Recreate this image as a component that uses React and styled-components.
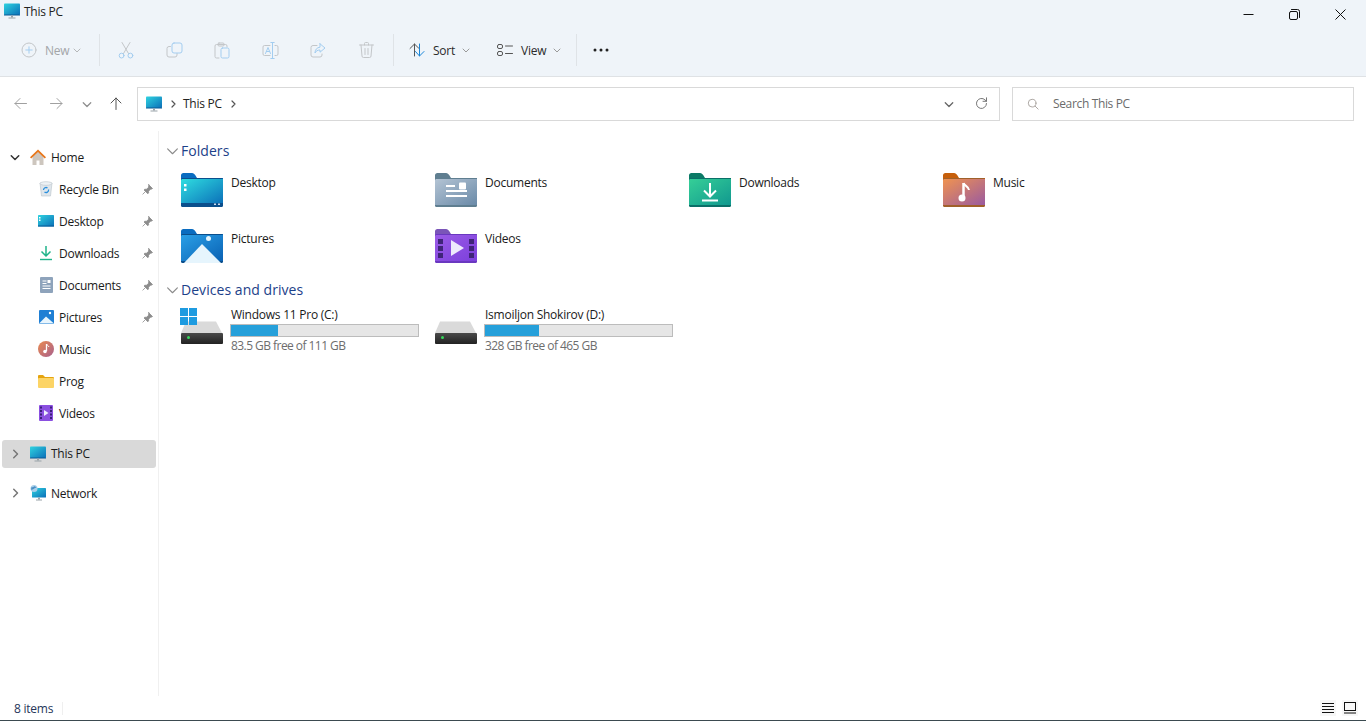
import styled, { createGlobalStyle } from "styled-components";

const GlobalStyle = createGlobalStyle`
    html, body, #root {
        margin: 0;
        padding: 0;
        height: 100%;
    }
    body {
        background: #fff;
        font-family: "Open Sans", "Noto Sans", "Liberation Sans", sans-serif;
        font-size: 12px;
        letter-spacing: -0.25px;
        color: #1a1a1a;
        overflow: hidden;
    }
`;

const Window = styled.div`
    height: 721px;
    display: flex;
    flex-direction: column;
    border-bottom: 1px solid #3b4a50;
    box-sizing: border-box;
`;

const TopBar = styled.div`
    height: 77px;
    box-sizing: border-box;
    background: #eff4f9;
    border-bottom: 1px solid #dfe2e5;
    flex-shrink: 0;
`;

const TitleRow = styled.div`
    height: 26px;
    display: flex;
    align-items: center;
    padding: 0 3px 4px 4px;
    box-sizing: border-box;
    gap: 4px;
`;

const TitleText = styled.span`
    flex: 1;
    line-height: 16px;
    padding-top: 1px;
    color: #222;
`;

const WinControls = styled.div`
    display: flex;
    margin-top: 6px;
`;

const WinButton = styled.div`
    width: 46px;
    height: 28px;
    display: flex;
    align-items: center;
    justify-content: center;
`;

const Toolbar = styled.div`
    height: 48px;
    display: flex;
    align-items: center;
    padding-left: 9px;
`;

const ToolSep = styled.div`
    width: 1px;
    height: 32px;
    background: #dfe3e7;
    margin: 0 ${p => p.$right ?? 2}px 0 ${p => p.$left ?? 6}px;
`;

const NewButton = styled.div`
    width: 84px;
    padding-left: 12px;
    box-sizing: border-box;
    display: flex;
    align-items: center;
    color: #a3a5a8;
`;

const NewGap = styled.span`
    width: 4px;
`;

const IconButton = styled.div`
    width: 48px;
    display: flex;
    justify-content: center;
    align-items: center;
`;

const MenuButton = styled.div`
    display: flex;
    align-items: center;
    width: ${p => p.$width}px;
    color: #2b2b2b;
    box-sizing: border-box;
`;

const MenuLabel = styled.span`
    margin: 0 ${p => p.$after}px 0 8px;
`;

const AddressRow = styled.div`
    height: 54px;
    flex-shrink: 0;
    display: flex;
    align-items: center;
    box-sizing: border-box;
    padding-right: 12px;
`;

const NavButtons = styled.div`
    width: 137px;
    display: flex;
    align-items: center;
    padding: 0 0 1px 14px;
    box-sizing: border-box;
    flex-shrink: 0;
`;

const NavSlot = styled.div`
    width: ${p => p.$width}px;
    display: flex;
    align-items: center;
`;

const InputBox = styled.div`
    height: 34px;
    box-sizing: border-box;
    border: 1px solid #d9d9d9;
    display: flex;
    align-items: center;
    background: #fff;
    padding-bottom: 1px;
`;

const AddressBox = styled(InputBox)`
    width: 863px;
    padding-left: 8px;
    padding-right: 11px;
`;

const AddressGap = styled.span`
    width: ${p => p.$width}px;
`;

const SearchBox = styled(InputBox)`
    width: 342px;
    margin-left: 12px;
    padding-left: 14px;
    color: #6b6b6b;
    gap: 14px;
    letter-spacing: -0.35px;
`;

const Crumb = styled.span`
    margin: 0 7px 0 6px;
    color: #222;
`;

const Spacer = styled.div`
    flex: 1;
`;

const Body = styled.div`
    flex: 1;
    display: flex;
    min-height: 0;
`;

const Sidebar = styled.nav`
    width: 159px;
    box-sizing: border-box;
    border-right: 1px solid #f0f0f0;
    padding-top: 10px;
    flex-shrink: 0;
`;

const NavRow = styled.div`
    height: ${p => (p.$top ? 28 : 32)}px;
    box-sizing: border-box;
    margin: ${p => (p.$top ? "11px 2px 0" : "0 2px")};
    padding-left: ${p => (p.$child ? 36 : 8)}px;
    padding-right: 3px;
    padding-bottom: ${p => (p.$selected ? 1 : 0)}px;
    display: flex;
    align-items: center;
    border-radius: 3px;
    background: ${p => (p.$selected ? "#d9d9d9" : "transparent")};
    color: #1a1a1a;
`;

const Twisty = styled.div`
    width: 20px;
    display: flex;
    align-items: center;
    justify-content: flex-start;
`;

const NavIcon = styled.div`
    width: 16px;
    height: 16px;
    display: flex;
    align-items: center;
    justify-content: center;
    margin-right: 5px;
`;

const NavLabel = styled.span`
    flex: 1;
`;

const Main = styled.main`
    flex: 1;
    padding: 9px 0 0 7px;
`;

const SectionHeader = styled.div`
    height: 20px;
    margin-top: ${p => p.$top || 0}px;
    display: flex;
    align-items: center;
    gap: 2px;
    font-size: 14px;
    letter-spacing: 0.05px;
    color: #1c4189;
`;

const TileGrid = styled.div`
    display: grid;
    grid-template-columns: repeat(4, 254px);
    row-gap: 22px;
    margin: ${p => p.$top}px 0 0 15px;
`;

const FolderTile = styled.div`
    height: 34px;
    display: flex;
    gap: 8px;
    color: #1a1a1a;
    line-height: 20px;
`;

const DriveTile = styled.div`
    display: flex;
    gap: 6px;
    margin-left: -1px;
`;

const DriveInfo = styled.div`
    width: 189px;
    margin-top: -1px;
    display: flex;
    flex-direction: column;
    line-height: 16px;
`;

const DriveName = styled.div`
    padding-left: 1px;
    margin-bottom: 1px;
`;

const UsageBar = styled.div`
    height: 13px;
    box-sizing: border-box;
    border: 1px solid #bcbcbc;
    background: #e6e6e6;
`;

const UsageFill = styled.div`
    height: 100%;
    background: #26a0da;
`;

const DriveFree = styled.div`
    padding: 1px 0 0 1px;
    color: #6d6d6d;
    letter-spacing: -0.55px;
`;

const StatusBar = styled.div`
    height: 24px;
    flex-shrink: 0;
    display: flex;
    align-items: center;
    padding: 0 8px 0 14px;
    color: #26365a;
`;

const StatusCount = styled.span`
    width: 49px;
    box-sizing: border-box;
    line-height: 12px;
    padding-top: 1px;
    border-right: 1px solid #efefef;
`;

const ViewToggle = styled.div`
    width: 16px;
    height: 16px;
    margin-left: 6px;
    background: #f7f7f7;
    display: flex;
    align-items: center;
    justify-content: center;
`;

const Line = { fill: "none", strokeLinecap: "round", strokeLinejoin: "round" };

const Chevron = ({ dir = "down", size = 8, color = "#9a9a9a", width = 1 }) => {
    const d = { down: "M1 3l3 3 3-3", right: "M3 1l3 3-3 3" }[dir];
    return (
        <svg width={size} height={size} viewBox="0 0 8 8">
            <path d={d} {...Line} stroke={color} strokeWidth={width} />
        </svg>
    );
};

const Monitor = ({ id, size = 16 }) => (
    <svg width={size} height={size} viewBox="0 0 16 16">
        <defs>
            <linearGradient id={id} x1="0" y1="0" x2="1" y2="1">
                <stop offset="0" stopColor="#2fd3e0" />
                <stop offset="1" stopColor="#0b6fb8" />
            </linearGradient>
        </defs>
        <rect x="0" y="0.5" width="16" height="11.5" rx="0.8" fill={`url(#${id})`} />
        <rect x="0" y="11.5" width="16" height="1" fill="#0a5a96" />
        <rect x="7" y="12.5" width="2" height="2" fill="#9aa3aa" />
        <rect x="4.5" y="14.5" width="7" height="1" fill="#9aa3aa" />
    </svg>
);

const ArrowIcon = ({ dir, color }) => {
    const d = {
        left: "M12.5 6.5H1M6 1.5l-5 5 5 5",
        right: "M.5 6.5H12M7 1.5l5 5-5 5",
        up: "M6 12.5V1M1 6l5-5 5 5",
    }[dir];
    return (
        <svg width="13" height="13" viewBox="0 0 13 13">
            <path d={d} {...Line} stroke={color} strokeWidth="1" />
        </svg>
    );
};

const GREY = "#c3c6c9";
const SKY = "#a3cdf0";

const NewIcon = () => (
    <svg width="16" height="16" viewBox="0 0 16 16" style={{ marginRight: 8 }}>
        <circle cx="8" cy="8" r="7" {...Line} stroke={GREY} />
        <path d="M8 4.8v6.4M4.8 8h6.4" {...Line} stroke={SKY} />
    </svg>
);

const CutIcon = () => (
    <svg width="16" height="17" viewBox="0 0 16 17">
        <path d="M4 .5l6.5 11M12 .5L5.500 11.500" {...Line} stroke={GREY} />
        <circle cx="3.600" cy="13.600" r="2.400" {...Line} stroke={SKY} />
        <circle cx="12.400" cy="13.600" r="2.400" {...Line} stroke={SKY} />
    </svg>
);

const CopyIcon = () => (
    <svg width="17" height="16" viewBox="0 0 17 16">
        <path d="M4.500 4.500H3A2 2 0 0 0 1 6.500V13a2 2 0 0 0 2 2h6a2 2 0 0 0 2-2v-1.500" {...Line} stroke={GREY} />
        <rect x="6" y="1" width="10" height="10" rx="2" {...Line} stroke={SKY} />
    </svg>
);

const PasteIcon = () => (
    <svg width="16" height="17" viewBox="0 0 16 17">
        <path d="M5 16H2.500A1.500 1.500 0 0 1 1 14.500V4a1.500 1.500 0 0 1 1.500-1.500h9A1.500 1.500 0 0 1 13 4v1" {...Line} stroke={GREY} />
        <rect x="4" y="1" width="6" height="3" rx="1" {...Line} stroke={GREY} />
        <rect x="7" y="6" width="8" height="10" rx="1.500" {...Line} stroke={SKY} />
    </svg>
);

const RenameIcon = () => (
    <svg width="17" height="17" viewBox="0 0 17 17">
        <path d="M8 3.500H2.500A1.500 1.500 0 0 0 1 5v7a1.500 1.500 0 0 0 1.500 1.500H8M13 3.500h1.500A1.500 1.500 0 0 1 16 5v7a1.500 1.500 0 0 1-1.500 1.500H13" {...Line} stroke={GREY} />
        <path d="M3.500 11.500L6 5.500l2.500 6M4.500 9.500h3" {...Line} stroke={SKY} />
        <path d="M10.500.5v16M8.800.5h3.400M8.800 16.500h3.400" {...Line} stroke={SKY} />
    </svg>
);

const ShareIcon = () => (
    <svg width="16" height="15" viewBox="0 0 16 15">
        <path d="M7 2.500H3A2 2 0 0 0 1 4.500V12a2 2 0 0 0 2 2h7a2 2 0 0 0 2-2v-1" {...Line} stroke={GREY} />
        <path d="M10 .8L15 5l-5 4.200V7C7.500 7 6 8 5 10c0-3.500 2-5.500 5-5.800V.8z" {...Line} stroke={SKY} />
    </svg>
);

const TrashIcon = () => (
    <svg width="15" height="16" viewBox="0 0 15 16">
        <path d="M.5 3h14M5.500 3V1.500a1 1 0 0 1 1-1h2a1 1 0 0 1 1 1V3M2 3l1 11a1.500 1.500 0 0 0 1.500 1.500h6A1.500 1.500 0 0 0 12 14l1-11M6 6.500v6M9 6.500v6" {...Line} stroke={GREY} />
    </svg>
);

const SortIcon = () => (
    <svg width="16" height="14" viewBox="0 0 16 14">
        <path d="M5.500 13V1M1 5.500l4.500-4.500L10 5.500" {...Line} stroke="#555" />
        <path d="M10.500 1v12M6.500 8.500l4 4.500 4.500-4.500" {...Line} stroke="#1a86d8" />
    </svg>
);

const ViewIcon = () => (
    <svg width="16" height="12" viewBox="0 0 16 12">
        <rect x=".5" y=".5" width="5" height="4" rx="1.500" {...Line} stroke="#555" />
        <rect x=".5" y="7.500" width="5" height="4" rx="1.500" {...Line} stroke="#555" />
        <path d="M8.500 2h7M8.500 9.500h7" {...Line} stroke="#555" />
    </svg>
);

const DotsIcon = () => (
    <svg width="16" height="4" viewBox="0 0 16 4">
        <circle cx="2" cy="2" r="1.500" fill="#222" />
        <circle cx="8" cy="2" r="1.500" fill="#222" />
        <circle cx="14" cy="2" r="1.500" fill="#222" />
    </svg>
);

const PinIcon = () => (
    <svg width="11" height="11" viewBox="0 0 11 11">
        <path d="M6.500.5l4 4-1 .6-1 .1-2 2 .1 1.700-.8.8L2 6l.8-.8 1.700.1 2-2 .1-1 .4-1.800zM3.400 7.600L.6 10.400" fill="#8c8c8c" stroke="#8c8c8c" strokeWidth=".8" strokeLinejoin="round" />
    </svg>
);

const HomeIcon = () => (
    <svg width="16" height="16" viewBox="0 0 16 16">
        <path d="M2.500 7.500V16h4v-4.500h3V16h4V7.500L8 2.500z" fill="#cdc6be" />
        <path d="M0 8.200L8 .5l8 7.700-1.200 1.200L8 3 1.200 9.400z" fill="#e8761a" />
    </svg>
);

const BinIcon = () => (
    <svg width="14" height="16" viewBox="0 0 14 16">
        <path d="M1 2l1.500 13h9L13 2z" fill="#dfe6ec" stroke="#b9c2ca" strokeWidth=".6" />
        <ellipse cx="7" cy="2.500" rx="6" ry="1.800" fill="#eef2f5" stroke="#b9c2ca" strokeWidth=".6" />
        <path d="M4.500 9a2.500 2.500 0 0 1 4-2M9.500 8.500a2.500 2.500 0 0 1-4 2.500" fill="none" stroke="#2a8fdc" strokeWidth="1.300" />
    </svg>
);

const DesktopMini = () => (
    <svg width="16" height="12" viewBox="0 0 16 12">
        <defs>
            <linearGradient id="miniDesk" x1="0" y1="0" x2="1" y2="1">
                <stop offset="0" stopColor="#2fd3e0" />
                <stop offset="1" stopColor="#0b6fb8" />
            </linearGradient>
        </defs>
        <rect width="16" height="11.500" rx=".6" fill="url(#miniDesk)" />
        <rect y="10.500" width="16" height="1" fill="#0a5a96" />
        <rect x="1" y="2" width="1.500" height="1.500" fill="#fff" />
        <rect x="1" y="4.500" width="1.500" height="1.500" fill="#fff" />
    </svg>
);

const DownloadMini = () => (
    <svg width="12" height="16" viewBox="0 0 12 16">
        <path d="M6 1v9.500M1.500 6.500L6 11l4.500-4.500" fill="none" stroke="#21b48a" strokeWidth="1.500" />
        <rect y="13.800" width="12" height="1.400" fill="#21b48a" />
    </svg>
);

const DocMini = () => (
    <svg width="13" height="16" viewBox="0 0 13 16">
        <rect width="13" height="16" rx="1" fill="#8ea3bb" />
        <path d="M2.500 4h4M2.500 6.500h4M2.500 9h8M2.500 11.500h8" stroke="#fff" strokeWidth="1" />
        <rect x="7.500" y="3" width="3" height="3" fill="#fff" />
    </svg>
);

const PictureMini = () => (
    <svg width="15" height="14" viewBox="0 0 15 14">
        <rect width="15" height="14" rx="1" fill="#1f7fd4" />
        <path d="M0 13.500L7 6.500l8 7z" fill="#e8f5fd" />
        <circle cx="11" cy="3" r="1.200" fill="#fff" />
    </svg>
);

const MusicMini = () => (
    <svg width="16" height="16" viewBox="0 0 16 16">
        <defs>
            <linearGradient id="miniMusic" x1="0" y1="0" x2="1" y2="1">
                <stop offset="0" stopColor="#ea8a4f" />
                <stop offset="1" stopColor="#a8608e" />
            </linearGradient>
        </defs>
        <circle cx="8" cy="8" r="8" fill="url(#miniMusic)" />
        <path d="M8.500 3v7" stroke="#fff" strokeWidth="1.300" />
        <path d="M8.500 3c.5 1.500 2 1.500 2.500 3" stroke="#fff" fill="none" />
        <circle cx="7" cy="10.500" r="1.800" fill="#fff" />
    </svg>
);

const FolderMini = () => (
    <svg width="16" height="13" viewBox="0 0 16 13">
        <path d="M0 1a1 1 0 0 1 1-1h4l2 2h8a1 1 0 0 1 1 1v1H0z" fill="#e5a40f" />
        <rect y="3" width="16" height="10" rx="1" fill="#fcd466" />
    </svg>
);

const VideoMini = () => (
    <svg width="14" height="16" viewBox="0 0 14 16">
        <rect width="14" height="16" rx="1" fill="#8a4fe0" />
        {[1.500, 5, 8.500, 12].map(y => (
            <g key={y}>
                <rect x="1" y={y} width="2" height="2" fill="#3a1f78" />
                <rect x="11" y={y} width="2" height="2" fill="#3a1f78" />
            </g>
        ))}
        <path d="M5 5l4.500 3L5 11z" fill="#eef" />
    </svg>
);

const NetworkIcon = () => (
    <svg width="16" height="16" viewBox="0 0 16 16">
        <defs>
            <linearGradient id="netScreen" x1="0" y1="0" x2="1" y2="1">
                <stop offset="0" stopColor="#2fd3e0" />
                <stop offset="1" stopColor="#0b6fb8" />
            </linearGradient>
        </defs>
        <rect x="2" y="3" width="14" height="9.500" rx=".6" fill="url(#netScreen)" />
        <rect x="8" y="12.500" width="2" height="2" fill="#9aa3aa" />
        <rect x="6" y="14.500" width="6" height="1" fill="#9aa3aa" />
        <circle cx="4" cy="3.500" r="3.500" fill="#a9cfe9" />
        <path d="M1.500 2c1 .5 2 .2 2.500-.5s2 .5 2.500 1c-1 0-2 1-3 1.500S2 5 1 4.500z" fill="#4b8fc4" />
    </svg>
);

// big folder icon, the artwork in front of it is passed as children
const Folder = ({ id, tab, from, to, edge, children }) => (
    <svg width="42" height="34" viewBox="0 0 42 34">
        <defs>
            <linearGradient id={id} x1="0" y1="0" x2="1" y2="1">
                <stop offset="0" stopColor={from} />
                <stop offset="1" stopColor={to} />
            </linearGradient>
        </defs>
        <path d="M0 2.500A2.500 2.500 0 0 1 2.500 0H11c1.500 0 2.500 1 3.500 2.500L16 5h26v6H0z" fill={tab} />
        <rect y="5" width="42" height="29" rx="1.500" fill={edge} />
        <path d="M0 7.500C0 6.500 .8 6 1.500 6H42v26H0z" fill={`url(#${id})`} />
        {children}
    </svg>
);

const folders = [
    {
        name: "Desktop", id: "fDesk", tab: "#0a6cc0", from: "#2fdde0", to: "#0a6db8", edge: "#0b4f8c",
        art: (
            <>
                <rect y="30" width="42" height="3" fill="#0b4f8c" />
                <rect x="3" y="11" width="2.500" height="2.500" fill="#fff" />
                <rect x="3" y="15.500" width="2.500" height="2.500" fill="#fff" />
                <rect x="33" y="30.500" width="2" height="1.500" fill="#cde" />
                <rect x="37" y="30.500" width="2" height="1.500" fill="#cde" />
            </>
        ),
    },
    {
        name: "Documents", id: "fDocs", tab: "#5f7e90", from: "#b4c4d4", to: "#6a8aa8", edge: "#5f7e90",
        art: (
            <>
                <path d="M11 13h9M11 18h21M11 23h21" stroke="#fff" strokeWidth="2" />
                <rect x="24" y="9.500" width="7" height="7" rx="1" fill="#fff" />
            </>
        ),
    },
    {
        name: "Downloads", id: "fDown", tab: "#0b7a66", from: "#35cf97", to: "#11988f", edge: "#0b6f68",
        art: (
            <>
                <path d="M21 10v13M15 17.500l6 6 6-6" fill="none" stroke="#fff" strokeWidth="2" />
                <rect x="13" y="26.500" width="16" height="2" fill="#fff" />
            </>
        ),
    },
    {
        name: "Music", id: "fMusic", tab: "#c65f0b", from: "#f09350", to: "#9a5aa0", edge: "#a0602a",
        art: (
            <>
                <path d="M20.500 10v15" stroke="#fff" strokeWidth="2.500" />
                <path d="M20.500 10c1 3 5 3 5.500 7" fill="none" stroke="#fff" strokeWidth="2" />
                <circle cx="19" cy="25" r="3.500" fill="#fff" />
            </>
        ),
    },
    {
        name: "Pictures", id: "fPics", tab: "#0a6cc0", from: "#2a9fe6", to: "#0a62b4", edge: "#0b4f8c",
        art: (
            <>
                <path d="M3 34L21 15l19 19z" fill="#e6f5fd" />
                <circle cx="27.500" cy="9.500" r="2.500" fill="#e6f5fd" />
            </>
        ),
    },
    {
        name: "Videos", id: "fVids", tab: "#7a55b8", from: "#9a5ce6", to: "#7c3fdc", edge: "#6a38c0",
        art: (
            <>
                {[10, 17, 24].map(y => (
                    <g key={y}>
                        <rect x="3" y={y} width="5" height="5" fill="#3f2478" />
                        <rect x="34" y={y} width="5" height="5" fill="#3f2478" />
                    </g>
                ))}
                <path d="M16 11l13 8-13 8z" fill="#eeeafc" />
            </>
        ),
    },
];

const navItems = [
    { name: "Recycle Bin", icon: <BinIcon /> },
    { name: "Desktop", icon: <DesktopMini /> },
    { name: "Downloads", icon: <DownloadMini /> },
    { name: "Documents", icon: <DocMini /> },
    { name: "Pictures", icon: <PictureMini /> },
    { name: "Music", icon: <MusicMini />, unpinned: true },
    { name: "Prog", icon: <FolderMini />, unpinned: true },
    { name: "Videos", icon: <VideoMini />, unpinned: true },
];

const DriveIcon = ({ id, system }) => (
    <svg width="44" height="36" viewBox="0 0 44 36">
        <defs>
            <linearGradient id={id} x1="0" y1="0" x2="0" y2="1">
                <stop offset="0" stopColor="#4a4a4a" />
                <stop offset="1" stopColor="#222" />
            </linearGradient>
        </defs>
        <path d="M6 13.500h30l6 11.500H1z" fill="#dadada" />
        <rect x="1" y="25" width="42" height="11" rx="1" fill={`url(#${id})`} />
        <rect x="7" y="28" width="3" height="3" rx="1.500" fill="#35d85a" />
        {system && (
            <g fill="#1e9be0">
                <rect x="0" y="0" width="8" height="8" />
                <rect x="9" y="0" width="8" height="8" />
                <rect x="0" y="9" width="8" height="8" />
                <rect x="9" y="9" width="8" height="8" />
            </g>
        )}
    </svg>
);

const App = () => (
    <Window>
        <GlobalStyle />
        <TopBar>
            <TitleRow>
                <Monitor id="titleScreen" />
                <TitleText>This PC</TitleText>
                <WinControls>
                    <WinButton>
                        <svg width="11" height="11" viewBox="0 0 11 11"><path d="M.5 5.500h10" stroke="#111" /></svg>
                    </WinButton>
                    <WinButton>
                        <svg width="11" height="11" viewBox="0 0 11 11">
                            <rect x=".5" y="2.500" width="8" height="8" rx="1.500" {...Line} stroke="#111" />
                            <path d="M2.500 .5h6a2 2 0 0 1 2 2v6" {...Line} stroke="#111" />
                        </svg>
                    </WinButton>
                    <WinButton>
                        <svg width="11" height="11" viewBox="0 0 11 11"><path d="M.5 .5l10 10M10.500 .5l-10 10" stroke="#111" /></svg>
                    </WinButton>
                </WinControls>
            </TitleRow>
            <Toolbar>
                <NewButton>
                    <NewIcon />
                    New
                    <NewGap />
                    <Chevron color="#b5b7b9" />
                </NewButton>
                <ToolSep />
                <IconButton><CutIcon /></IconButton>
                <IconButton><CopyIcon /></IconButton>
                <IconButton><PasteIcon /></IconButton>
                <IconButton><RenameIcon /></IconButton>
                <IconButton><ShareIcon /></IconButton>
                <IconButton><TrashIcon /></IconButton>
                <ToolSep $left={3} $right={15} />
                <MenuButton $width={88}>
                    <SortIcon />
                    <MenuLabel $after={7}>Sort</MenuLabel>
                    <Chevron />
                </MenuButton>
                <MenuButton $width={79}>
                    <ViewIcon />
                    <MenuLabel $after={7}>View</MenuLabel>
                    <Chevron />
                </MenuButton>
                <ToolSep $left={0} $right={16} />
                <DotsIcon />
            </Toolbar>
        </TopBar>
        <AddressRow>
            <NavButtons>
                <NavSlot $width={36}><ArrowIcon dir="left" color="#a0a0a0" /></NavSlot>
                <NavSlot $width={32}><ArrowIcon dir="right" color="#a0a0a0" /></NavSlot>
                <NavSlot $width={28}><Chevron color="#8f8f8f" size={10} /></NavSlot>
                <NavSlot $width={14}><ArrowIcon dir="up" color="#555" /></NavSlot>
            </NavButtons>
            <AddressBox>
                <Monitor id="addrScreen" />
                <AddressGap $width={7} />
                <Chevron dir="right" color="#555" width={1.2} />
                <Crumb>This PC</Crumb>
                <Chevron dir="right" color="#555" width={1.2} />
                <Spacer />
                <Chevron color="#666" size={10} />
                <AddressGap $width={21} />
                <svg width="13" height="13" viewBox="0 0 13 13">
                    <path d="M11.500 6.500a5 5 0 1 1-1.500-3.600l1.500 1.400M11.500 .8v3.500H8" {...Line} stroke="#777" />
                </svg>
            </AddressBox>
            <SearchBox>
                <svg width="12" height="12" viewBox="0 0 14 14">
                    <circle cx="6" cy="6" r="4.500" {...Line} stroke="#a09a96" />
                    <path d="M9.500 9.500l3.500 3.500" {...Line} stroke="#a09a96" />
                </svg>
                Search This PC
            </SearchBox>
        </AddressRow>
        <Body>
            <Sidebar>
                <NavRow>
                    <Twisty><Chevron color="#333" size={10} width={1.200} /></Twisty>
                    <NavIcon><HomeIcon /></NavIcon>
                    <NavLabel>Home</NavLabel>
                </NavRow>
                {navItems.map(item => (
                    <NavRow key={item.name} $child>
                        <NavIcon>{item.icon}</NavIcon>
                        <NavLabel>{item.name}</NavLabel>
                        {!item.unpinned && <PinIcon />}
                    </NavRow>
                ))}
                <NavRow $top $selected>
                    <Twisty><Chevron dir="right" size={10} color="#777" width={1.200} /></Twisty>
                    <NavIcon><Monitor id="navScreen" /></NavIcon>
                    <NavLabel>This PC</NavLabel>
                </NavRow>
                <NavRow $top>
                    <Twisty><Chevron dir="right" size={10} color="#777" width={1.200} /></Twisty>
                    <NavIcon><NetworkIcon /></NavIcon>
                    <NavLabel>Network</NavLabel>
                </NavRow>
            </Sidebar>
            <Main>
                <SectionHeader>
                    <Chevron color="#8a8a8a" size={13} width={0.7} />
                    Folders
                </SectionHeader>
                <TileGrid $top={13}>
                    {folders.map(f => (
                        <FolderTile key={f.name}>
                            <Folder {...f}>{f.art}</Folder>
                            {f.name}
                        </FolderTile>
                    ))}
                </TileGrid>
                <SectionHeader $top={16}>
                    <Chevron color="#8a8a8a" size={13} width={0.7} />
                    Devices and drives
                </SectionHeader>
                <TileGrid $top={9}>
                    <DriveTile>
                        <DriveIcon id="driveC" system />
                        <DriveInfo>
                            <DriveName>Windows 11 Pro (C:)</DriveName>
                            <UsageBar><UsageFill style={{ width: "25%" }} /></UsageBar>
                            <DriveFree>83.5 GB free of 111 GB</DriveFree>
                        </DriveInfo>
                    </DriveTile>
                    <DriveTile>
                        <DriveIcon id="driveD" />
                        <DriveInfo>
                            <DriveName>Ismoiljon Shokirov (D:)</DriveName>
                            <UsageBar><UsageFill style={{ width: "29%" }} /></UsageBar>
                            <DriveFree>328 GB free of 465 GB</DriveFree>
                        </DriveInfo>
                    </DriveTile>
                </TileGrid>
            </Main>
        </Body>
        <StatusBar>
            <StatusCount>8 items</StatusCount>
            <Spacer />
            <ViewToggle>
                <svg width="12" height="11" viewBox="0 0 12 11"><path d="M0 .5h12M0 3.500h12M0 6.500h12M0 9.500h12" stroke="#111" /></svg>
            </ViewToggle>
            <ViewToggle>
                <svg width="12" height="12" viewBox="0 0 12 12"><rect x=".5" y=".5" width="11" height="8" fill="none" stroke="#111" /><path d="M0 11h12" stroke="#111" /></svg>
            </ViewToggle>
        </StatusBar>
    </Window>
);

export default App;
